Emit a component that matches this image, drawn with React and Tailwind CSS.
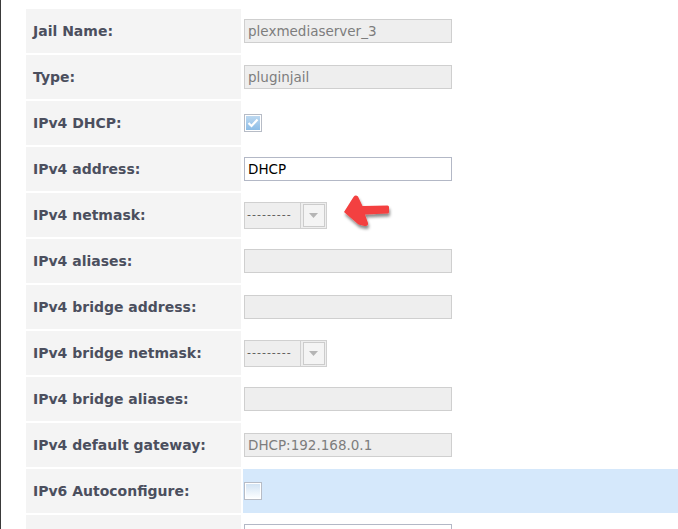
import React from 'react';

const rows = [
  { label: 'Jail Name:', kind: 'text', value: 'plexmediaserver_3', disabled: true },
  { label: 'Type:', kind: 'text', value: 'pluginjail', disabled: true },
  { label: 'IPv4 DHCP:', kind: 'check', checked: true },
  { label: 'IPv4 address:', kind: 'text', value: 'DHCP' },
  { label: 'IPv4 netmask:', kind: 'select', arrow: true },
  { label: 'IPv4 aliases:', kind: 'text', value: '', disabled: true },
  { label: 'IPv4 bridge address:', kind: 'text', value: '', disabled: true },
  { label: 'IPv4 bridge netmask:', kind: 'select' },
  { label: 'IPv4 bridge aliases:', kind: 'text', value: '', disabled: true },
  { label: 'IPv4 default gateway:', kind: 'text', value: 'DHCP:192.168.0.1', disabled: true },
  { label: 'IPv6 Autoconfigure:', kind: 'check', checked: false, highlight: true },
  // next row is cut by the bottom edge, its label sits below the fold
  { label: '', kind: 'text', value: '', top: true },
];

function TextBox({ value, disabled }) {
  return (
    <div
      className={`flex h-[24px] w-[208px] items-center px-[3px] text-[13.5px] ${
        disabled
          ? 'border border-[#cfcfcf] bg-[#eeeeee] text-[#7d7d7d]'
          : 'border border-[#b3b8c6] bg-white text-black'
      }`}
    >
      {value}
    </div>
  );
}

function CheckBox({ checked }) {
  return (
    <div className="flex h-[18px] w-[18px] items-center justify-center border border-[#b7bcc6] bg-white p-[1px]">
      {checked ? (
        <div className="flex h-full w-full items-center justify-center bg-gradient-to-b from-[#bcd8f0] to-[#8dbde6]">
          <svg width="12" height="10" viewBox="0 0 12 10">
            <path d="M1.5 5 L4.5 8 L10.5 1.5" fill="none" stroke="#ffffff" strokeWidth="2.2" />
          </svg>
        </div>
      ) : (
        <div className="h-full w-full bg-gradient-to-b from-[#d3e4f4] to-[#fbfdff]" />
      )}
    </div>
  );
}

function SelectBox() {
  return (
    <div className="flex h-[27px] w-[83px] border border-[#d0d0d0] bg-[#eeeeee]">
      <div className="flex flex-1 items-center pl-[2px] text-[11px] tracking-[1px] text-[#555]">---------</div>
      <div className="flex w-[26px] items-center justify-center border-l border-[#d0d0d0]">
        <div className="flex h-[23px] w-[22px] items-center justify-center border border-[#cccccc] bg-[#f4f4f4]">
          <svg width="9" height="5" viewBox="0 0 9 5">
            <path d="M0 0 L9 0 L4.5 5 Z" fill="#b5b5b5" />
          </svg>
        </div>
      </div>
    </div>
  );
}

function RedArrow() {
  return (
    <svg width="52" height="40" viewBox="0 0 52 40" className="ml-[16px] mt-[-2px]">
      <defs>
        <filter id="sh" x="-20%" y="-20%" width="150%" height="160%">
          <feDropShadow dx="1" dy="3" stdDeviation="1.6" floodColor="#000" floodOpacity="0.45" />
        </filter>
      </defs>
      <path
        d="M1 18 L10.5 3 Q12.5 0.5 15 2.5 L19.5 12 L44.5 11.5 Q46 11.5 46 13 L46 18 Q46 19.5 44.5 19.5 L22 20.5 L25 29 Q25.5 32.5 21.5 32 L15.5 30.5 Z"
        fill="#f3403f"
        filter="url(#sh)"
      />
    </svg>
  );
}

export default function App() {
  return (
    <div
      className="flex h-[529px] w-[678px] overflow-hidden bg-white"
      style={{ fontFamily: '"DejaVu Sans", Verdana, sans-serif' }}
    >
      <div className="w-[1px] shrink-0 bg-[#3a3a3a]" />
      <div className="flex-1 pl-[25px] pt-[9px]">
        <div className="grid grid-cols-[215px_1fr] gap-[2px]">
          {rows.map((row, i) => (
            <React.Fragment key={i}>
              <div className="flex h-[44px] items-center bg-[#f4f4f4] pl-[7px] text-[14px] font-bold text-[#4b4f5e]">
                {row.label}
              </div>
              <div
                className={`flex h-[44px] pl-[1px] ${row.top ? 'items-start pt-[9px]' : 'items-center'} ${
                  row.highlight ? 'bg-[#d5e8fb]' : 'bg-white'
                }`}
              >
                {row.kind === 'text' ? <TextBox value={row.value} disabled={row.disabled} /> : null}
                {row.kind === 'check' ? <CheckBox checked={row.checked} /> : null}
                {row.kind === 'select' ? <SelectBox /> : null}
                {row.arrow ? <RedArrow /> : null}
              </div>
            </React.Fragment>
          ))}
        </div>
      </div>
    </div>
  );
}
